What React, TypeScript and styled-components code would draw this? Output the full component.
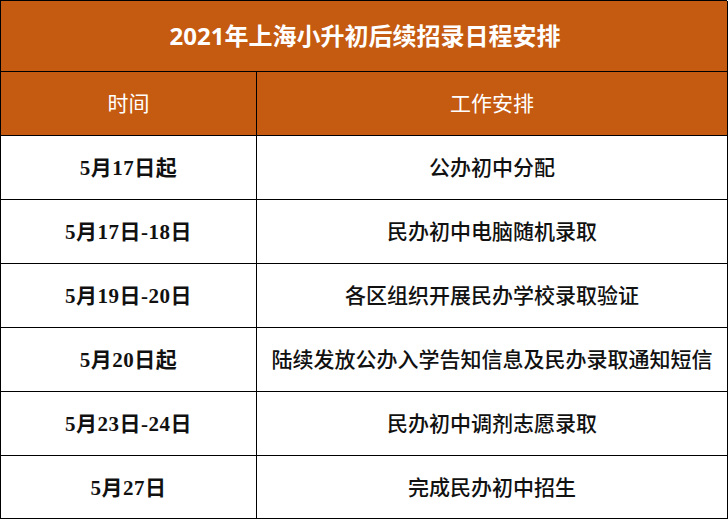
import React from "react";
import styled, { createGlobalStyle } from "styled-components";

const GlobalStyle = createGlobalStyle`
  * {
    box-sizing: border-box;
  }
  body {
    margin: 0;
    background: #ffffff;
  }
`;

const schedule = [
  { time: "5月17日起", work: "公办初中分配" },
  { time: "5月17日-18日", work: "民办初中电脑随机录取" },
  { time: "5月19日-20日", work: "各区组织开展民办学校录取验证" },
  { time: "5月20日起", work: "陆续发放公办入学告知信息及民办录取通知短信" },
  { time: "5月23日-24日", work: "民办初中调剂志愿录取" },
  { time: "5月27日", work: "完成民办初中招生" },
];

const Table = styled.div`
  width: 727px;
  display: grid;
  grid-template-columns: 256px 471px;
  grid-template-rows: 71px 64px repeat(5, 64px) 63px;
  border-top: 1.5px solid #000;
  border-left: 1.5px solid #000;
`;

const Cell = styled.div<{ $head?: boolean }>`
  display: flex;
  align-items: center;
  justify-content: center;
  padding-bottom: 3px;
  border-right: 1.5px solid #000;
  border-bottom: 1.5px solid #000;
  background: ${(p) => (p.$head ? "#c55a11" : "#ffffff")};
  color: ${(p) => (p.$head ? "#ffffff" : "#111111")};
  font-family: "Liberation Serif", "Noto Sans CJK SC", serif;
  font-size: 21px;
  font-weight: ${(p) => (p.$head ? 400 : 500)};
  white-space: nowrap;
`;

const Digits = styled.span`
  font-weight: 700;
  letter-spacing: 0.5px;
`;

const Title = styled(Cell)`
  grid-column: 1 / 3;
  font-family: "Open Sans", "Noto Sans CJK SC", sans-serif;
  font-size: 24px;
  font-weight: 700;
  padding-left: 2px;
`;

function App() {
  return (
    <>
      <GlobalStyle />
      <Table>
        <Title $head>2021年上海小升初后续招录日程安排</Title>
        <Cell $head>时间</Cell>
        <Cell $head>工作安排</Cell>
        {schedule.map((row) => (
          <React.Fragment key={row.time}>
            <Cell>
              <Digits>{row.time}</Digits>
            </Cell>
            <Cell>{row.work}</Cell>
          </React.Fragment>
        ))}
      </Table>
    </>
  );
}

export default App;
